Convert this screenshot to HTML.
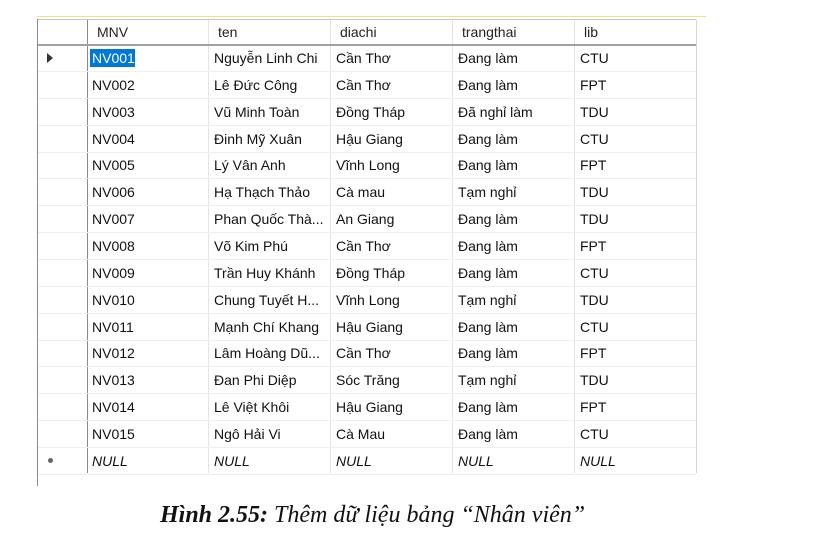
<!DOCTYPE html>
<html><head><meta charset="utf-8"><style>
body{margin:0;width:817px;height:552px;background:#fff;position:relative;overflow:hidden;font-family:"Liberation Sans",sans-serif;}
.yl{position:absolute;left:37px;top:16px;width:669px;height:1px;background:#f3e27a;}
.grid{position:absolute;left:37px;top:19px;width:659px;height:454px;border-top:1px solid #c8c8c8;}
.lb{position:absolute;left:37px;top:19px;width:1px;height:467px;background:#8a8a8a;}
.c{position:absolute;font-size:14px;color:#111;line-height:26px;white-space:nowrap;}
.h{color:#222;}
.i{font-style:italic;}
.vl{position:absolute;width:1px;background:#e4e4e4;top:20px;height:453px;}
.hl{position:absolute;left:38px;width:658px;height:1px;background:#efefef;}
.cap{position:absolute;top:502px;left:160px;white-space:nowrap;font-family:"Liberation Serif",serif;font-style:italic;font-size:24px;color:#111;}
</style></head><body>
<div class="yl"></div>
<div class="grid"></div>
<div class="lb"></div>
<div class="vl" style="left:87px;background:#8a8a8a"></div>
<div class="vl" style="left:208px"></div>
<div class="vl" style="left:330px"></div>
<div class="vl" style="left:452px"></div>
<div class="vl" style="left:574px"></div>
<div class="vl" style="left:696px;background:#d8d8d8"></div>
<div class="hl" style="top:44px;height:2px;background:#a0a0a0"></div>
<div style="position:absolute;left:90px;top:49px;width:45px;height:18px;background:#0078d7"></div>
<div id="rows"></div>
<div class="c h" style="left:97px;top:19px">MNV</div>
<div class="c h" style="left:218px;top:19px">ten</div>
<div class="c h" style="left:340px;top:19px">diachi</div>
<div class="c h" style="left:462px;top:19px">trangthai</div>
<div class="c h" style="left:584px;top:19px">lib</div>
<div style="position:absolute;left:47px;top:53px;width:0;height:0;border-top:5px solid transparent;border-bottom:5px solid transparent;border-left:6px solid #333"></div>
<div style="position:absolute;left:48px;top:458px;width:5px;height:5px;border-radius:50%;background:#666"></div>
<script>
var d=[["NV001","Nguyễn Linh Chi","Cần Thơ","Đang làm","CTU"],["NV002","Lê Đức Công","Cần Thơ","Đang làm","FPT"],["NV003","Vũ Minh Toàn","Đồng Tháp","Đã nghỉ làm","TDU"],["NV004","Đinh Mỹ Xuân","Hậu Giang","Đang làm","CTU"],["NV005","Lý Vân Anh","Vĩnh Long","Đang làm","FPT"],["NV006","Hạ Thạch Thảo","Cà mau","Tạm nghỉ","TDU"],["NV007","Phan Quốc Thà...","An Giang","Đang làm","TDU"],["NV008","Võ Kim Phú","Cần Thơ","Đang làm","FPT"],["NV009","Trần Huy Khánh","Đồng Tháp","Đang làm","CTU"],["NV010","Chung Tuyết H...","Vĩnh Long","Tạm nghỉ","TDU"],["NV011","Mạnh Chí Khang","Hậu Giang","Đang làm","CTU"],["NV012","Lâm Hoàng Dũ...","Cần Thơ","Đang làm","FPT"],["NV013","Đan Phi Diệp","Sóc Trăng","Tạm nghỉ","TDU"],["NV014","Lê Việt Khôi","Hậu Giang","Đang làm","FPT"],["NV015","Ngô Hải Vi","Cà Mau","Đang làm","CTU"],["NULL","NULL","NULL","NULL","NULL"]];
var xs=[92,214,336,458,580],h="";
for(var r=0;r<d.length;r++){var t=45+r*26.85;h+='<div class="hl" style="top:'+Math.round(t+26)+'px"></div>';
for(var k=0;k<5;k++){var col=(r==0&&k==0)?'color:#fff;':'';h+='<div class="c'+(r==15?' i':'')+'" style="'+col+'left:'+xs[k]+'px;top:'+Math.round(t)+'px">'+d[r][k]+'</div>';}}
document.getElementById('rows').innerHTML=h;
</script>
<div class="cap"><b>Hình 2.55:</b> Thêm dữ liệu bảng “Nhân viên”</div>
</body></html>
